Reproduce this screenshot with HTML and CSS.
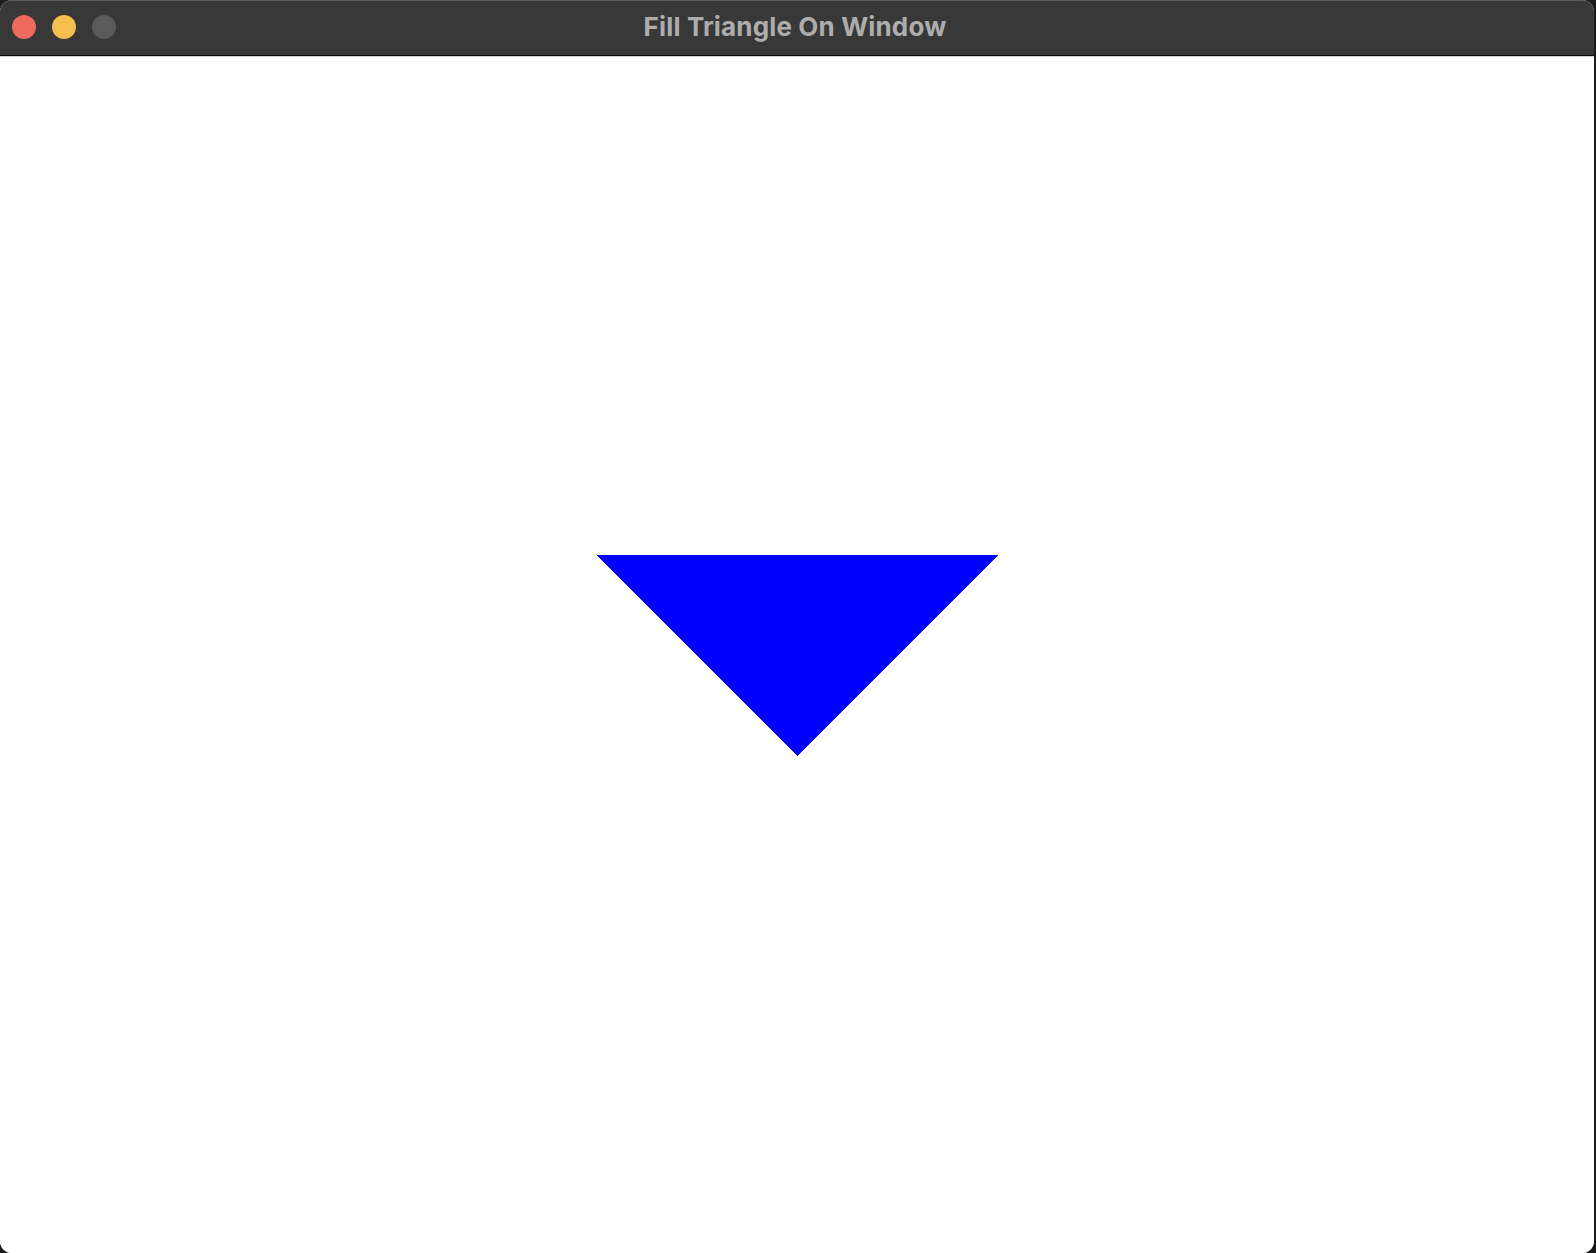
FILE: index.html
```html
<!DOCTYPE html>
<html>
<head>
<meta charset="utf-8">
<title>Fill Triangle On Window</title>
<link rel="stylesheet" href="styles.css">
</head>
<body>
<div class="window">
  <div class="titlebar">
    <div class="lights">
      <span class="light red"></span>
      <span class="light yellow"></span>
      <span class="light gray"></span>
    </div>
    <div class="title">Fill Triangle On Window</div>
  </div>
  <div class="content">
    <svg class="canvas" width="1594" height="1197" viewBox="0 0 1594 1197">
      <polygon points="596,499 998,499 797,700" fill="#0000ff" shape-rendering="crispEdges"/>
    </svg>
  </div>
</div>
</body>
</html>
```

FILE: styles.css
```css
html, body {
  margin: 0;
  padding: 0;
  background: #1a1a1a;
  width: 1596px;
  height: 1253px;
  overflow: hidden;
}
.window {
  width: 1594px;
  height: 1253px;
  border-radius: 12px;
  overflow: hidden;
  background: #ffffff;
  display: flex;
  flex-direction: column;
}
.titlebar {
  height: 55px;
  flex: 0 0 55px;
  background: #383838;
  border-top: 1px solid #5c5c5c;
  box-sizing: border-box;
  display: flex;
  align-items: center;
  position: relative;
}
.lights {
  display: flex;
  gap: 16px;
  padding-left: 12px;
  padding-bottom: 2px;
}
.light {
  width: 24px;
  height: 24px;
  border-radius: 50%;
  display: block;
}
.red { background: #ee6a5f; }
.yellow { background: #f5bf4f; }
.gray { background: #5a5a5a; }
.title {
  position: absolute;
  left: 0;
  right: 0;
  top: 0;
  bottom: 0;
  display: flex;
  align-items: center;
  justify-content: center;
  padding-right: 4px;
  padding-bottom: 3px;
  font-family: Inter, "Noto Sans", sans-serif;
  font-weight: 700;
  font-size: 26px;
  color: #adadad;
  letter-spacing: 0.15px;
}
.content {
  flex: 1 1 auto;
  border-top: 1px solid #0c0c0c;
  box-shadow: inset 0 1px 0 #cfcfcf;
  background: #ffffff;
}
.canvas {
  display: block;
}
```
